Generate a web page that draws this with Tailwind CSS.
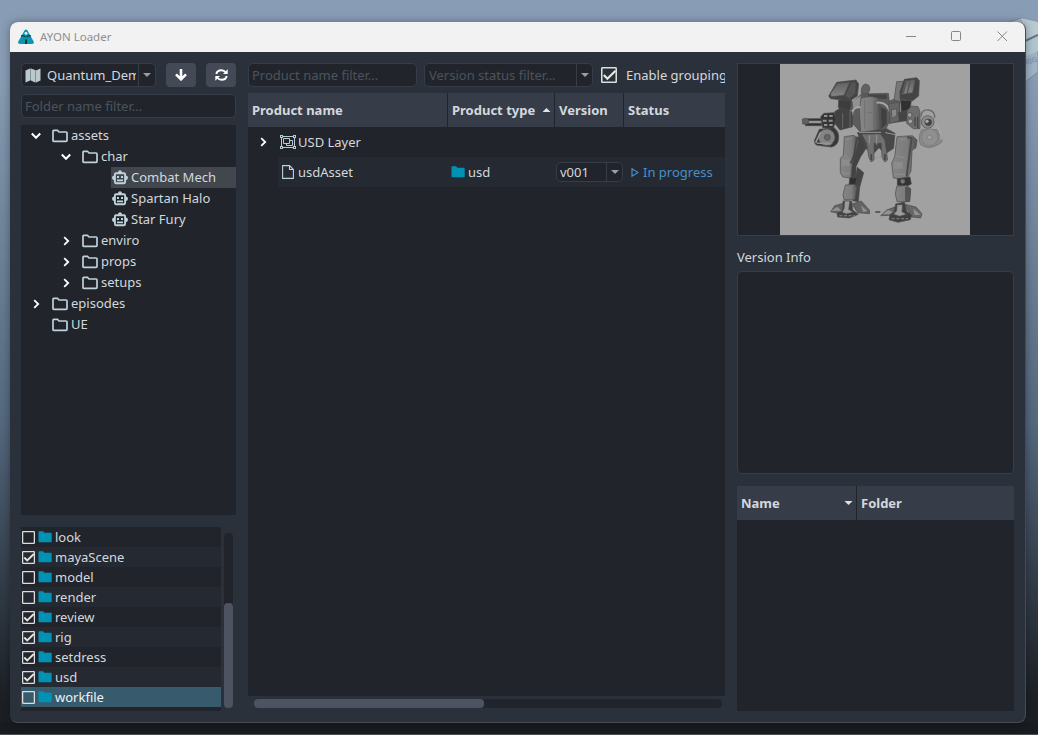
<!DOCTYPE html>
<html lang="en">
<head>
<meta charset="utf-8">
<title>AYON Loader</title>
<script src="https://cdn.jsdelivr.net/npm/@tailwindcss/browser@4"></script>
</head>
<body class="relative w-[1038px] h-[735px] overflow-hidden bg-[#879cb4] font-['Noto_Sans',sans-serif] text-[13px] leading-5 text-[#d3d8de]">
<svg class="hidden">
  <symbol id="folder" viewBox="0 0 16 14"><path d="M1 12V2Q1 1.300 1.800 1.300H5.500L7 3H14Q15 3 15 3.800V11.500Q15 12.300 14 12.300H1.800Q1 12.300 1 12Z" fill="none" stroke="#c0d2da" stroke-width="1.700"/></symbol>
  <symbol id="solid" viewBox="0 0 14 12"><path d="M.5 1Q.5.300 1.200.300H5L6.500 1.700H13Q13.700 1.700 13.700 2.400V10.500Q13.700 11.300 13 11.300H1.200Q.5 11.300.5 10.500Z" fill="#0092b5"/></symbol>
  <symbol id="robot" viewBox="0 0 16 15"><path d="M2.900 4.500Q2.900 3.200 4 3.200H12Q13.100 3.200 13.100 4.500V12Q13.100 13.200 12 13.200H4Q2.900 13.200 2.900 12Z" fill="none" stroke="#c0d2da" stroke-width="1.900"/><path d="M6.100 3V1.800Q6.300.200 8 .200T9.900 1.800V3ZM2.500 5.500V10.200Q0 10 0 7.800T2.500 5.500ZM13.500 5.500V10.200Q16 10 16 7.800T13.500 5.500ZM5 6H7V7.900H5ZM9 6H11V7.900H9ZM5 9.500H11V11.200H5Z" fill="#c0d2da"/></symbol>
  <symbol id="right" viewBox="0 0 8 10"><path d="M2.200 1.200L6.200 5L2.200 8.800" fill="none" stroke="#fff" stroke-width="1.800"/></symbol>
  <symbol id="down" viewBox="0 0 10 8"><path d="M.8 1.500L5 5.800L9.200 1.500" fill="none" stroke="#fff" stroke-width="2"/></symbol>
  <symbol id="box" viewBox="0 0 13 13"><rect x=".6" y=".6" width="11.800" height="11.800" rx=".8" fill="none" stroke="#dcdedd" stroke-width="1.300"/></symbol>
  <symbol id="checked" viewBox="0 0 13 13"><rect x=".6" y=".6" width="11.800" height="11.800" rx=".8" fill="none" stroke="#dcdedd" stroke-width="1.300"/><path d="M2.300 6.500L5.200 9.500L11.800 3" fill="none" stroke="#e5e5e2" stroke-width="1.800"/></symbol>
</svg>

<!-- desktop behind the window -->
<div class="absolute inset-0 bg-linear-to-b from-[#889db5] from-10% via-[#53677d] via-58% to-[#1b1f24] to-96%"></div>
<div class="absolute inset-x-0 bottom-0 h-[12px] bg-[#181b1f] border-b border-[#4b4e51]"></div>
<svg class="absolute left-[1006px] top-[14px] w-8 h-[72px]" viewBox="0 0 32 72"><path d="M0 9L15 4L32 8V58L19 68Z" fill="#9fb3c6" stroke="#7f8c98"/><path d="M15 4L32 8V20L19 27V16Z" fill="#b7c9d1"/><path d="M19 27L32 21V37L19 43Z" fill="#afc6cc"/><path d="M19 27L32 21" stroke="#627485" stroke-width="2"/><text x="20" y="51" font-size="7" transform="rotate(-18 20 51)" fill="#74859a">RIG</text></svg>

<!-- application window -->
<div class="absolute left-[10px] top-[22px] w-[1016px] h-[701px] rounded-lg overflow-hidden bg-[#2b313a] border-r border-b border-[#464b50] shadow-[0_0_8px_rgba(0,0,0,0.35)] flex flex-col">
  <header class="h-[30px] shrink-0 bg-[#f2f2f2] flex items-center pl-2 text-[11.5px] text-[#8f8f8f]">
    <svg class="w-4 h-4 mr-1.5" viewBox="0 0 16 16"><path d="M6.500 1.500Q8-.5 9.500 1.500L15.700 12.500Q16.500 15 14 15H2Q-.5 15 .3 12.500Z" fill="#0b97b0"/><circle cx="8" cy="4.300" r="1.400" fill="#e8f3f5"/><path d="M3 6.800H5.500L7.500 8M13 6.800H10.500L8.500 8" stroke="#17343c" stroke-width="1.200" fill="none"/><path d="M7 10.500H9V15H7Z" fill="#17343c"/></svg>
    <span>AYON Loader</span>
    <svg class="ml-auto mr-[15px] mb-[2px] w-[104px] h-3" viewBox="0 0 104 12" fill="none" stroke="#868686"><path d="M0 6.500H10"/><rect x="45.500" y="1.500" width="9" height="9" rx="1"/><path d="M91.500 1.500L101 11M101 1.500L91.500 11"/></svg>
  </header>

  <main class="flex-1 min-h-0 flex pl-[11px] pr-[11px] pt-[11px] gap-3">
    <!-- projects, folders, product types -->
    <section class="w-[215px] shrink-0 flex flex-col">
      <div class="flex h-6">
        <div class="w-[135px] h-6 border border-[#373d48] rounded-[5px] bg-[#21252b] flex items-center pl-[3px]">
          <svg class="w-4 h-[15px] shrink-0" viewBox="0 0 16 15"><path d="M.5 2.500L5 .5V12.500L.5 14.500ZM6 .5L10 2V14.500L6 12.500ZM11 2.500L15.500.5V12.500L11 14.500Z" fill="#b9c9cd"/><path d="M5.500.5V12.500M10.500 2V14.500" stroke="#839097"/></svg>
          <span class="ml-[6px] w-[89px] overflow-hidden whitespace-nowrap">Quantum_Demo</span>
          <span class="ml-[2px] w-4 h-full border-l border-[#373d48] flex items-center justify-center"><svg class="w-2 h-1" viewBox="0 0 8 4"><path d="M0 0H8L4 4Z" fill="#979da3"/></svg></span>
        </div>
        <div class="ml-[10px] w-[30px] h-6 rounded-[4px] bg-[#434a56] flex items-center justify-center"><svg class="w-3 h-3" viewBox="0 0 12 12"><path d="M6 0V10M1 5.300L6 10.300L11 5.300" fill="none" stroke="#fff" stroke-width="2.600"/></svg></div>
        <div class="ml-[10px] w-[30px] h-6 rounded-[4px] bg-[#434a56] flex items-center justify-center"><svg class="w-[13px] h-3" viewBox="0 0 13 12"><path d="M1.300 5Q2 1.200 6.500 1.200Q9 1.200 11 3.500M11.700 7Q11 10.800 6.500 10.800Q4 10.800 2 8.500" fill="none" stroke="#fff" stroke-width="1.900"/><path d="M12.700.3V5H8ZM.3 11.700V7H5Z" fill="#fff"/></svg></div>
      </div>
      <div class="mt-[7px] h-6 border border-[#373d48] rounded-[5px] bg-[#21252b] pl-[3px] leading-[22px] text-[#4c535e]">Folder name filter...</div>
      <div class="mt-[7px] h-[390px] bg-[#21252b] leading-[21px]">
        <div class="h-[21px] flex items-center pl-[10px]"><svg class="w-[10px] h-2"><use href="#down"/></svg><svg class="ml-[11px] w-4 h-[14px]"><use href="#folder"/></svg><span class="ml-[3px]">assets</span></div>
        <div class="h-[21px] flex items-center pl-[40px]"><svg class="w-[10px] h-2"><use href="#down"/></svg><svg class="ml-[11px] w-4 h-[14px]"><use href="#folder"/></svg><span class="ml-[3px]">char</span></div>
        <div class="h-[21px] ml-[90px] bg-[#42474d] flex items-center pl-[1px]"><svg class="w-4 h-[15px]"><use href="#robot"/></svg><span class="ml-[3px]">Combat Mech</span></div>
        <div class="h-[21px] ml-[90px] flex items-center pl-[1px]"><svg class="w-4 h-[15px]"><use href="#robot"/></svg><span class="ml-[3px]">Spartan Halo</span></div>
        <div class="h-[21px] ml-[90px] flex items-center pl-[1px]"><svg class="w-4 h-[15px]"><use href="#robot"/></svg><span class="ml-[3px]">Star Fury</span></div>
        <div class="h-[21px] flex items-center pl-[41px]"><svg class="w-2 h-[10px]"><use href="#right"/></svg><svg class="ml-3 w-4 h-[14px]"><use href="#folder"/></svg><span class="ml-[3px]">enviro</span></div>
        <div class="h-[21px] flex items-center pl-[41px]"><svg class="w-2 h-[10px]"><use href="#right"/></svg><svg class="ml-3 w-4 h-[14px]"><use href="#folder"/></svg><span class="ml-[3px]">props</span></div>
        <div class="h-[21px] flex items-center pl-[41px]"><svg class="w-2 h-[10px]"><use href="#right"/></svg><svg class="ml-3 w-4 h-[14px]"><use href="#folder"/></svg><span class="ml-[3px]">setups</span></div>
        <div class="h-[21px] flex items-center pl-[11px]"><svg class="w-2 h-[10px]"><use href="#right"/></svg><svg class="ml-3 w-4 h-[14px]"><use href="#folder"/></svg><span class="ml-[3px]">episodes</span></div>
        <div class="h-[21px] flex items-center pl-[31px]"><svg class="w-4 h-[14px]"><use href="#folder"/></svg><span class="ml-[3px]">UE</span></div>
      </div>
      <div class="mt-3 h-[184px] flex">
        <div class="w-[200px] bg-[#21252b]">
          <div class="h-5 flex items-center pl-[1px]"><svg class="w-[13px] h-[13px]"><use href="#box"/></svg><svg class="ml-[3px] w-[14px] h-3"><use href="#solid"/></svg><span class="ml-[3px]">look</span></div>
          <div class="h-5 flex items-center pl-[1px] bg-[#252931]"><svg class="w-[13px] h-[13px]"><use href="#checked"/></svg><svg class="ml-[3px] w-[14px] h-3"><use href="#solid"/></svg><span class="ml-[3px]">mayaScene</span></div>
          <div class="h-5 flex items-center pl-[1px]"><svg class="w-[13px] h-[13px]"><use href="#box"/></svg><svg class="ml-[3px] w-[14px] h-3"><use href="#solid"/></svg><span class="ml-[3px]">model</span></div>
          <div class="h-5 flex items-center pl-[1px] bg-[#252931]"><svg class="w-[13px] h-[13px]"><use href="#box"/></svg><svg class="ml-[3px] w-[14px] h-3"><use href="#solid"/></svg><span class="ml-[3px]">render</span></div>
          <div class="h-5 flex items-center pl-[1px]"><svg class="w-[13px] h-[13px]"><use href="#checked"/></svg><svg class="ml-[3px] w-[14px] h-3"><use href="#solid"/></svg><span class="ml-[3px]">review</span></div>
          <div class="h-5 flex items-center pl-[1px] bg-[#252931]"><svg class="w-[13px] h-[13px]"><use href="#checked"/></svg><svg class="ml-[3px] w-[14px] h-3"><use href="#solid"/></svg><span class="ml-[3px]">rig</span></div>
          <div class="h-5 flex items-center pl-[1px]"><svg class="w-[13px] h-[13px]"><use href="#checked"/></svg><svg class="ml-[3px] w-[14px] h-3"><use href="#solid"/></svg><span class="ml-[3px]">setdress</span></div>
          <div class="h-5 flex items-center pl-[1px] bg-[#252931]"><svg class="w-[13px] h-[13px]"><use href="#checked"/></svg><svg class="ml-[3px] w-[14px] h-3"><use href="#solid"/></svg><span class="ml-[3px]">usd</span></div>
          <div class="h-5 flex items-center pl-[1px] bg-[#375a6d] text-[#f0f2f3]"><svg class="w-[13px] h-[13px]"><use href="#box"/></svg><svg class="ml-[3px] w-[14px] h-3"><use href="#solid"/></svg><span class="ml-[3px]">workfile</span></div>
        </div>
        <div class="ml-[3px] mt-[6px] w-[9px] h-[175px] rounded-[4px] bg-[#21252b] flex flex-col justify-end"><div class="h-[105px] rounded-[4px] bg-[#4d5361]"></div></div>
      </div>
    </section>

    <!-- products -->
    <section class="w-[477px] shrink-0 flex flex-col">
      <div class="flex h-6 overflow-hidden">
        <div class="w-[169px] shrink-0 h-6 border border-[#373d48] rounded-[5px] bg-[#21252b] pl-[3px] leading-[22px] text-[#4c535e]">Product name filter...</div>
        <div class="ml-[7px] w-[169px] shrink-0 h-6 border border-[#373d48] rounded-[5px] bg-[#21252b] pl-[4px] leading-[22px] text-[#4c535e] flex justify-between">Version status filter...<span class="w-4 h-full border-l border-[#373d48] flex items-center justify-center"><svg class="w-2 h-1" viewBox="0 0 8 4"><path d="M0 0H8L4 4Z" fill="#979da3"/></svg></span></div>
        <svg class="ml-2 mt-1 w-4 h-4 shrink-0"><use href="#checked"/></svg>
        <span class="ml-[9px] leading-6 whitespace-nowrap">Enable grouping</span>
      </div>
      <div class="mt-[6px] h-[34px] bg-[#373d48] flex font-bold leading-[34px]">
        <div class="w-[200px] pl-1 border-r border-[#21252b]">Product name</div>
        <div class="w-[107px] pl-1 border-r border-[#21252b] flex items-center whitespace-nowrap">Product type<svg class="ml-auto mr-[3px] w-[9px] h-1" viewBox="0 0 8 4"><path d="M0 4H8L4 0Z" fill="#e0e3e6"/></svg></div>
        <div class="w-[69px] pl-1 border-r border-[#21252b]">Version</div>
        <div class="pl-1">Status</div>
      </div>
      <div class="h-[569px] bg-[#21252b]">
        <div class="h-[30px] flex items-center pl-[11px]"><svg class="w-2 h-[10px]"><use href="#right"/></svg>
          <svg class="ml-[13px] w-4 h-[14px]" viewBox="0 0 16 14" fill="none" stroke="#b9cbd3"><path d="M2 1.500H14M2 12.500H14M1.500 2V12M14.500 2V12M3.500 3.500H9.500V8.500H3.500ZM9.500 5.500H12.500V10.500H6.500V8.500"/><path d="M0 0H3V3H0ZM13 0H16V3H13ZM0 11H3V14H0ZM13 11H16V14H13Z" fill="#b9cbd3" stroke="none"/><path d="M1 1H2V2H1ZM14 1H15V2H14ZM1 12H2V13H1ZM14 12H15V13H14Z" fill="#21252b" stroke="none"/></svg>
          <span class="ml-[2px]">USD Layer</span></div>
        <div class="h-[30px] ml-[30px] bg-[#252931] flex items-center">
          <div class="w-[169px] pl-1 flex items-center"><svg class="w-3 h-[14px]" viewBox="0 0 12 14" fill="none" stroke="#c0d2da" stroke-width="1.100"><path d="M.6.600H7.500L11.400 4.500V13.400H.6ZM7.500.6V4.500H11.400"/></svg><span class="ml-1">usdAsset</span></div>
          <div class="w-[109px] pl-[4px] flex items-center"><svg class="w-[14px] h-3"><use href="#solid"/></svg><span class="ml-[3px]">usd</span></div>
          <div class="w-[67px] h-5 border border-[#373d48] rounded-[5px] bg-[#21252b] flex justify-between pl-[3px] leading-[18px]">v001<span class="w-4 border-l border-[#373d48] flex items-center justify-center"><svg class="w-2 h-1" viewBox="0 0 8 4"><path d="M0 0H8L4 4Z" fill="#979da3"/></svg></span></div>
          <svg class="ml-2 w-[8px] h-[9px]" viewBox="0 0 8 9"><path d="M1 .8L7 4.500L1 8.200Z" fill="none" stroke="#4590cb" stroke-width="1.200"/></svg><span class="ml-[4px] text-[#4590cb]">In progress</span>
        </div>
      </div>
      <div class="mt-[3px] ml-[6px] w-[468px] h-[9px] rounded-[4px] bg-[#21252b]"><div class="w-[230px] h-[9px] rounded-[4px] bg-[#4d5361]"></div></div>
    </section>

    <!-- preview and version details -->
    <section class="w-[277px] shrink-0 flex flex-col">
      <div class="h-[173px] border border-[#373d48] bg-[#21252b] pl-[42px]">
        <svg class="w-[190px] h-[171px] bg-[#a1a1a1]" viewBox="30 12 570 513">
          <defs>
            <linearGradient id="m" x2="1"><stop offset="0" stop-color="#858585"/><stop offset=".6" stop-color="#7c7c7c"/><stop offset="1" stop-color="#505050"/></linearGradient>
            <linearGradient id="v" x2="0" y2="1"><stop offset="0" stop-color="#606060"/><stop offset="1" stop-color="#858585"/></linearGradient>
          </defs>
          <g stroke="#4c4c4c" stroke-width="2" stroke-linejoin="round">
            <path d="M206 120L245 118L242 150L225 160L205 142Z" fill="#3d3d3d"/>
            <path d="M176 108L200 67L258 60L266 72L262 108L240 122L182 116Z" fill="#444"/>
            <path d="M181 102L202 70L240 66L222 106L184 110Z" fill="url(#v)"/>
            <path d="M225 108L244 68L257 66L256 100L238 116Z" fill="#555"/>
            <path d="M274 100Q272 76 286 72Q302 74 299 90L290 110Z" fill="#626262"/>
            <path d="M244 128L275 102L355 100L358 124L388 110L390 185L356 190L345 212L270 215L246 188Z" fill="#5c5c5c"/>
            <path d="M248 122L272 108V140L250 144Z" fill="#929292" stroke="none"/>
            <path d="M295 104H350V116H300Z" fill="#444"/>
            <path d="M273 114Q300 105 326 114L332 205L318 218H272L268 150Z" fill="url(#m)"/>
            <path d="M284 120V205M312 120V208M292 158H306" fill="none" stroke="#686868"/>
            <path d="M246 165Q248 138 272 142M320 128Q350 124 360 156" fill="none" stroke="#a5a5a5" stroke-width="6"/>
            <path d="M332 140L350 150V192L334 206Z" fill="#404040"/>
            <path d="M356 132L388 126V182L360 190Z" fill="#656565"/><path d="M364 150L380 146V166L366 176Z" fill="#888"/>
            <path d="M380 65L400 64L395 126L372 120Z" fill="#777"/>
            <path d="M403 58L440 53L448 62L446 108L428 122L390 118L390 94Z" fill="#444"/>
            <path d="M405 62L436 58L428 98L396 103Z" fill="url(#v)"/>
            <path d="M408 64L400 100M420 62L412 100" stroke="#555" stroke-width="4"/>
            <path d="M392 120L424 122L420 150L394 158Z" fill="#303030"/><path d="M384 158L412 150V182L388 185Z" fill="#454545"/>
            <path d="M194 155L212 143L246 156L248 200L210 210L194 190Z" fill="#424242"/>
            <path d="M152 170L162 160L192 158L198 178L190 205L158 203Z" fill="#343434"/>
            <path d="M162 168H172M178 168H188M158 182H170M176 182H188M162 195H172M178 195H188" stroke="#919191" stroke-width="6"/>
            <path d="M112 176H155V182H112ZM106 190H155V197H106Z" fill="#303030"/><path d="M97 177L108 174L117 181L114 192L98 192Z" fill="#606060"/>
            <path d="M218 160V205M240 155V202" stroke="#666" stroke-width="3"/>
            <path d="M148 208L192 203Q208 215 206 235Q204 258 184 261L142 256Q134 254 133 242Z" fill="#383838"/>
            <circle cx="170" cy="232" r="25" fill="#848484"/><circle cx="172" cy="232" r="9" fill="#666"/><path d="M137 248L152 216M140 249L184 252" fill="none" stroke="#969696" stroke-width="5"/>
            <path d="M411 152L424 138L444 140L450 155V206L430 206L410 190Z" fill="#6d6d6d"/>
            <circle cx="419" cy="165" r="7" fill="#9c9c9c"/><circle cx="421" cy="184" r="7" fill="#a2a2a2"/>
            <path d="M435 172V198M443 170V204" stroke="#444" stroke-width="4"/>
            <circle cx="473" cy="186" r="19" fill="#8a8a8a"/><circle cx="475" cy="187" r="10" fill="#404040"/><circle cx="471" cy="184" r="6" fill="#a8a8a8"/>
            <path d="M453 170Q454 148 476 150Q495 153 494 174" fill="none" stroke="#686868" stroke-width="4"/>
            <path d="M455 209H501L517 242Q515 250 490 260Q471 267 452 254Q442 235 455 209Z" fill="#8a8a8a" stroke="#6b6b6b"/>
            <circle cx="479" cy="232" r="25" fill="#8f8f8f" stroke="#777"/><circle cx="479" cy="232" r="7" fill="#a0a0a0" stroke="#777"/><path d="M496 190Q512 209 514 240" fill="none" stroke="#a8a8a8" stroke-width="4"/>
            <path d="M262 218L350 206L375 220L371 265L345 282L327 263L312 280L288 266L275 253Z" fill="#484848"/>
            <path d="M275 222H332L345 242L353 300L344 306L336 292L334 250L312 250V300L303 306L296 290L290 250Z" fill="#707070"/>
            <path d="M298 226V250M320 224V254M268 217H333M316 292H337M346 218L376 224" fill="none" stroke="#969696" stroke-width="3"/>
            <path d="M304 282V300M345 282V300" stroke="#444" stroke-width="5"/>
            <path d="M248 230L278 232L287 267L272 290L258 320V350L243 356Z" fill="#434343"/>
            <path d="M223 230L252 226L267 240L247 308L242 354L219 351L211 338V296L220 285Z" fill="url(#m)"/>
            <path d="M260 236L252 285L242 310" fill="none" stroke="#444" stroke-width="5"/>
            <path d="M262 322L281 338L269 382L265 425L248 422L254 365Z" fill="#454545"/>
            <path d="M239 354L262 352L256 375H237Z" fill="#303030"/>
            <path d="M226 375L252 373L262 380L255 419L222 419L219 405Z" fill="url(#m)"/>
            <path d="M381 230L427 227L441 240L438 263L426 271L423 333L410 359L370 354L365 310L374 291Z" fill="url(#m)"/>
            <path d="M412 231L425 235L415 307L410 350" fill="none" stroke="#4b4b4b" stroke-width="6"/>
            <path d="M382 356L420 351L424 372L408 380L382 376Z" fill="#343434"/><circle cx="398" cy="364" r="7" fill="#777"/>
            <path d="M380 379L410 376L422 387L419 425L381 425L376 402Z" fill="url(#m)"/>
            <path d="M407 382L422 386L419 421L407 426Z" fill="#555"/>
            <path d="M182 455L194 437L220 430L225 455L204 460ZM246 432L274 423L298 450L299 461L263 458Z" fill="#636363"/>
            <path d="M184 452L202 440L214 452ZM272 436L292 452L280 457Z" fill="#929292" stroke="none"/>
            <path d="M219 423H245L248 450L265 463L238 474L203 471L201 460L218 452Z" fill="#444"/>
            <path d="M224 423H240L236 448L250 457L229 462L216 457L222 446Z" fill="#9b9b9b"/>
            <path d="M332 467L350 450L375 441L388 457L366 466ZM405 433L438 441L456 461L452 474L424 471Z" fill="#666"/>
            <path d="M338 463L354 450L368 455L360 463ZM430 446L452 464L433 465Z" fill="#929292" stroke="none"/>
            <path d="M377 432L403 426L411 455L425 465L421 479L384 487L357 479L360 464L372 456Z" fill="#404040"/>
            <path d="M381 434H398L396 455L410 463L389 469L370 463L380 452Z" fill="#9b9b9b"/>
            <path d="M208 467H255M365 476H414" stroke="#777" stroke-width="4" stroke-dasharray="9 5"/>
            <path d="M316 456H331" stroke="#444" stroke-width="5"/>
          </g>
          <path d="M215 298H238V318H215ZM371 306H398V326H371Z" fill="#8c8c8c"/>
          <path d="M226 240L244 235M389 240L407 237M223 285L244 300M376 288L404 293M216 340H240M371 343H407" stroke="#959595" stroke-width="2"/>
        </svg>
      </div>
      <div class="mt-[11px] h-5">Version Info</div>
      <div class="mt-1 h-[203px] border border-[#373d48] rounded-[5px] bg-[#21252b]"></div>
      <div class="mt-3 h-[225px] bg-[#21252b]">
        <div class="h-[34px] bg-[#373d48] flex font-bold leading-[34px]">
          <div class="w-[120px] pl-1 border-r border-[#21252b] flex items-center">Name<svg class="ml-auto mr-[3px] w-[9px] h-1" viewBox="0 0 8 4"><path d="M0 0H8L4 4Z" fill="#e0e3e6"/></svg></div>
          <div class="pl-1">Folder</div>
        </div>
      </div>
    </section>
  </main>
</div>
</body>
</html>
